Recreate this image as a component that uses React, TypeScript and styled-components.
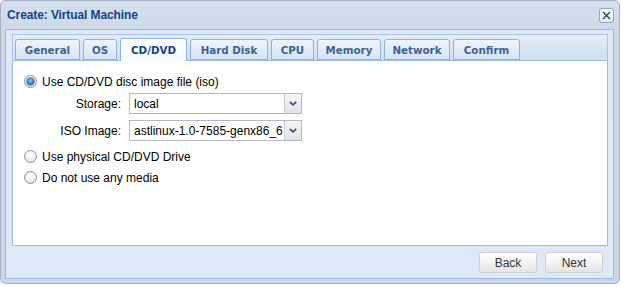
import styled, { createGlobalStyle } from "styled-components"

const GlobalStyle = createGlobalStyle`
  html, body {
    margin: 0;
    padding: 0;
    background: #ffffff;
  }
  * {
    box-sizing: border-box;
  }
`

// tab label + measured width in the strip
const tabs: [string, number][] = [
  ["General", 65],
  ["OS", 34],
  ["CD/DVD", 67],
  ["Hard Disk", 78],
  ["CPU", 43],
  ["Memory", 64],
  ["Network", 66],
  ["Confirm", 67],
]
const ACTIVE_TAB = "CD/DVD"

const Chevron = () => (
  <svg width="8" height="5" viewBox="0 0 8 5">
    <polyline points="0.8,0.8 4,3.8 7.2,0.8" fill="none" stroke="#2f4e7e" strokeWidth="1.6" />
  </svg>
)

const Combo = ({ value }: { value: string }) => (
  <ComboBox>
    <ComboText>{value}</ComboText>
    <Trigger>
      <Chevron />
    </Trigger>
  </ComboBox>
)

const App = () => {
  return (
    <>
      <GlobalStyle />
      <Window>
        <Header>
          <Title>Create: Virtual Machine</Title>
          <CloseButton>
            <svg width="9" height="9" viewBox="0 0 9 9">
              <path d="M1 1 L8 8 M8 1 L1 8" stroke="#15428b" strokeWidth="1.3" fill="none" />
            </svg>
          </CloseButton>
        </Header>
        <BodyPanel>
          <TabStrip>
            {tabs.map(([tab, width]) => (
              <Tab key={tab} $width={width} $active={tab === ACTIVE_TAB}>{tab}</Tab>
            ))}
          </TabStrip>
          <TabBody>
            <RadioRow>
              <Radio $checked />
              <RadioLabel>Use CD/DVD disc image file (iso)</RadioLabel>
            </RadioRow>
            <FieldRow>
              <FieldLabel>Storage:</FieldLabel>
              <Combo value="local" />
            </FieldRow>
            <FieldRow>
              <FieldLabel>ISO Image:</FieldLabel>
              <Combo value="astlinux-1.0-7585-genx86_6" />
            </FieldRow>
            <RadioRow>
              <Radio />
              <RadioLabel>Use physical CD/DVD Drive</RadioLabel>
            </RadioRow>
            <RadioRow>
              <Radio />
              <RadioLabel>Do not use any media</RadioLabel>
            </RadioRow>
          </TabBody>
          <Footer>
            <Button>Back</Button>
            <Button>Next</Button>
          </Footer>
        </BodyPanel>
      </Window>
    </>
  )
}

export default App


const Window = styled.div`
  width: 620px;
  height: 284px;
  display: flex;
  flex-direction: column;
  padding: 0 5px 4px 4px;
  border: 1px solid #a7b4c6;
  border-radius: 5px;
  background: linear-gradient(180deg, #d6e0ec 0%, #ccd8e7 12%, #cbd7e6 100%);
  font-family: "Liberation Sans", Arial, sans-serif;
`

const Header = styled.div`
  height: 28px;
  flex: none;
  display: flex;
  align-items: center;
  justify-content: space-between;
  padding: 0 0 0 2px;
`

const Title = styled.div`
  color: #15428b;
  font-size: 12px;
  font-weight: bold;
  letter-spacing: -0.1px;
`

const CloseButton = styled.div`
  width: 15px;
  height: 15px;
  display: flex;
  align-items: center;
  justify-content: center;
  border: 1px solid #8ba5c9;
  border-radius: 3px;
  background: linear-gradient(180deg, #ffffff 0%, #e4ecf7 100%);
`

const BodyPanel = styled.div`
  flex: 1;
  display: flex;
  flex-direction: column;
  border: 1px solid #99bbe8;
  background: #dfe8f6;
  padding: 4px 5px 0 6px;
`

const TabStrip = styled.div`
  height: 26px;
  flex: none;
  display: flex;
  align-items: flex-end;
  gap: 3px;
  padding: 0 0 0 2px;
  border: 1px solid #a9c4e8;
  border-bottom: none;
  background: linear-gradient(180deg, #e4edf9 0%, #cfdef3 100%);
`

const Tab = styled.div<{ $active?: boolean; $width: number }>`
  width: ${p => p.$width}px;
  height: ${p => (p.$active ? 23 : 21)}px;
  display: flex;
  align-items: center;
  justify-content: center;
  margin-bottom: ${p => (p.$active ? -1 : 0)}px;
  position: relative;
  border: 1px solid #8db2e3;
  border-bottom: ${p => (p.$active ? "none" : "1px solid #8db2e3")};
  border-radius: 3px 3px 0 0;
  background: ${p =>
    p.$active
      ? "linear-gradient(180deg, #ffffff 0%, #f7fafe 100%)"
      : "linear-gradient(180deg, #eef4fc 0%, #d6e4f6 100%)"};
  color: ${p => (p.$active ? "#15428b" : "#3f6296")};
  font-family: "DejaVu Sans", Verdana, sans-serif;
  font-size: 10.3px;
  font-weight: bold;
  white-space: nowrap;
`

const TabBody = styled.div`
  height: 186px;
  flex: none;
  display: flex;
  flex-direction: column;
  padding: 10px 0 0 11px;
  background: #ffffff;
  border: 1px solid #99bbe8;
`

const RadioRow = styled.div`
  height: 21px;
  display: flex;
  align-items: center;
  gap: 5px;
`

const Radio = styled.div<{ $checked?: boolean }>`
  width: 13px;
  height: 13px;
  border-radius: 50%;
  border: 1px solid #8f8f8f;
  background: radial-gradient(circle at 50% 35%, #ffffff 0%, #eeeeee 55%, #d4d4d4 100%);
  display: flex;
  align-items: center;
  justify-content: center;

  &::after {
    content: "";
    display: ${p => (p.$checked ? "block" : "none")};
    width: 7px;
    height: 7px;
    border-radius: 50%;
    background: radial-gradient(circle at 50% 40%, #8cc6f5 0%, #2f7ccf 55%, #0f3f80 100%);
    box-shadow: 0 0 0 0.5px #1c3a66;
  }
`

const RadioLabel = styled.span`
  font-size: 12px;
  color: #000000;
`

const FieldRow = styled.div`
  height: 21px;
  margin: 1px 0 5px;
  display: flex;
  align-items: center;
`

const FieldLabel = styled.div`
  width: 105px;
  padding-right: 8px;
  text-align: right;
  font-size: 12px;
  color: #000000;
`

const ComboBox = styled.div`
  width: 173px;
  height: 21px;
  display: flex;
  border: 1px solid #b5b8c8;
  background: #ffffff;
  overflow: hidden;
`

const ComboText = styled.div`
  flex: 1;
  min-width: 0;
  padding: 0 4px;
  display: flex;
  align-items: center;
  font-size: 12px;
  color: #000000;
  white-space: nowrap;
  overflow: hidden;
`

const Trigger = styled.div`
  width: 17px;
  flex: none;
  display: flex;
  align-items: center;
  justify-content: center;
  border-left: 1px solid #c4c7d2;
  background: linear-gradient(180deg, #f6f6f6 0%, #e2e2e2 100%);
`

const Footer = styled.div`
  flex: 1;
  display: flex;
  justify-content: flex-end;
  align-items: flex-start;
  gap: 8px;
  padding: 6px 5px 0 0;
`

const Button = styled.div`
  width: 58px;
  height: 21px;
  display: flex;
  align-items: center;
  justify-content: center;
  border: 1px solid #cfcfcf;
  border-radius: 3px;
  background: linear-gradient(180deg, #ffffff 0%, #f3f3f3 50%, #e4e4e4 100%);
  font-size: 12px;
  color: #333333;
`
